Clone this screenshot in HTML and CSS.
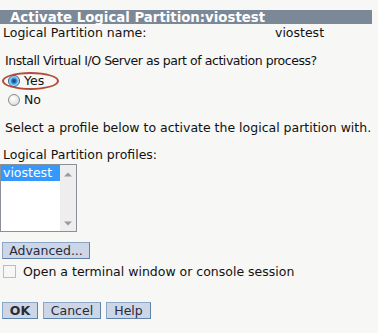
FILE: index.html
```html
<!DOCTYPE html>
<html>
<head>
<meta charset="utf-8">
<link rel="stylesheet" href="styles.css">
</head>
<body>
<div class="page">
  <div class="titlebar">Activate Logical Partition:viostest</div>
  <div class="namerow"><span class="namelabel">Logical Partition name:</span><span class="nameval">viostest</span></div>
  <div class="question">Install Virtual I/O Server as part of activation process?</div>
  <div class="radio yes"><span class="rb on"></span><span>Yes</span><span class="ring"></span></div>
  <div class="radio no"><span class="rb"></span><span>No</span></div>
  <div class="select-text">Select a profile below to activate the logical partition with.</div>
  <div class="profiles-label">Logical Partition profiles:</div>
  <div class="listbox">
    <div class="items"><div class="item sel">viostest</div></div>
    <div class="scroll">
      <svg class="arr" width="8" height="5" viewBox="0 0 8 5"><path d="M0 4.5 L4 0.5 L8 4.5 Z" fill="#9a9a9a"/></svg>
      <svg class="arr" width="8" height="5" viewBox="0 0 8 5"><path d="M0 0.5 L8 0.5 L4 4.5 Z" fill="#9a9a9a"/></svg>
    </div>
  </div>
  <div class="advrow"><span class="btn adv">Advanced...</span></div>
  <div class="checkrow"><span class="cb"></span><span>Open a terminal window or console session</span></div>
  <div class="buttons"><span class="btn ok">OK</span><span class="btn cancel">Cancel</span><span class="btn help">Help</span></div>
</div>
</body>
</html>
```
FILE: styles.css
```css
html, body { margin: 0; padding: 0; }
body {
  background: #f7f7f5;
  font-family: "DejaVu Sans", Verdana, sans-serif;
  font-size: 12.5px;
  color: #111;
  width: 378px;
  height: 333px;
  overflow: hidden;
}
.page { padding-top: 10px; }
.titlebar {
  width: 362px;
  height: 14px;
  line-height: 15px;
  background: #7a8898;
  color: #fff;
  font-weight: bold;
  font-size: 13.3px;
  padding-left: 10px;
}
.namerow { display: flex; height: 16px; line-height: 16px; margin-top: 1px; padding-left: 3px; }
.namelabel { width: 272px; }
.question { margin-top: 12px; padding-left: 5px; line-height: 16px; letter-spacing: -0.45px; }
.radio { position: relative; display: flex; align-items: center; gap: 4px; padding-left: 8px; height: 19px; }
.radio.yes { margin-top: 2px; }
.rb {
  width: 12px; height: 12px; border-radius: 50%;
  border: 1px solid #8a8a8a;
  background: radial-gradient(circle at 40% 35%, #fff 0%, #e6e6e6 60%, #cfcfcf 100%);
  box-sizing: border-box;
}
.rb.on {
  border-color: #2a5d8a;
  background: radial-gradient(circle at 50% 50%, #0f3f6e 0, #1f6fb5 2px, #6ab8ee 3.5px, #d8eefb 5.5px);
}
.ring {
  position: absolute; left: 2px; top: 1px; width: 57px; height: 18px;
  border: 2px solid #b34a3a; border-radius: 50%; box-sizing: border-box;
}
.select-text { margin-top: 11px; padding-left: 5px; line-height: 16px; }
.profiles-label { margin-top: 11px; padding-left: 3px; line-height: 16px; }
.listbox {
  margin-top: 1px;
  width: 77px; height: 68px; box-sizing: border-box;
  border: 1px solid #8a8e96;
  background: #fff;
  display: flex;
}
.items { flex: 1; }
.item { height: 16px; line-height: 16px; padding-left: 2px; }
.item.sel { background: #3399ff; color: #fff; }
.scroll {
  width: 16px; background: #eeeeee;
  display: flex; flex-direction: column; justify-content: space-between; align-items: center;
  padding: 7px 0 5px;
  box-sizing: border-box;
}
.arr { display: block; }
.advrow { margin-top: 10px; padding-left: 2px; display: flex; }
.btn {
  display: inline-block; box-sizing: border-box; height: 17px; line-height: 15px;
  background: #ccd6e6; border: 1px solid #5f82ad;
  border-top-color: #8ea6c6; border-left-color: #8ea6c6;
  color: #2a2a3a; text-align: center;
}
.adv { width: 88px; }
.checkrow { display: flex; align-items: center; gap: 7px; padding-left: 3px; height: 19px; margin-top: 3px; }
.cb { width: 13px; height: 13px; box-sizing: border-box; border: 1px solid #bcbcbc; background: #f7f7f5; }
.buttons { margin-top: 21px; padding-left: 2px; display: flex; gap: 5px; }
.ok { width: 36px; font-weight: bold; }
.cancel { width: 58px; }
.help { width: 45px; }
```
